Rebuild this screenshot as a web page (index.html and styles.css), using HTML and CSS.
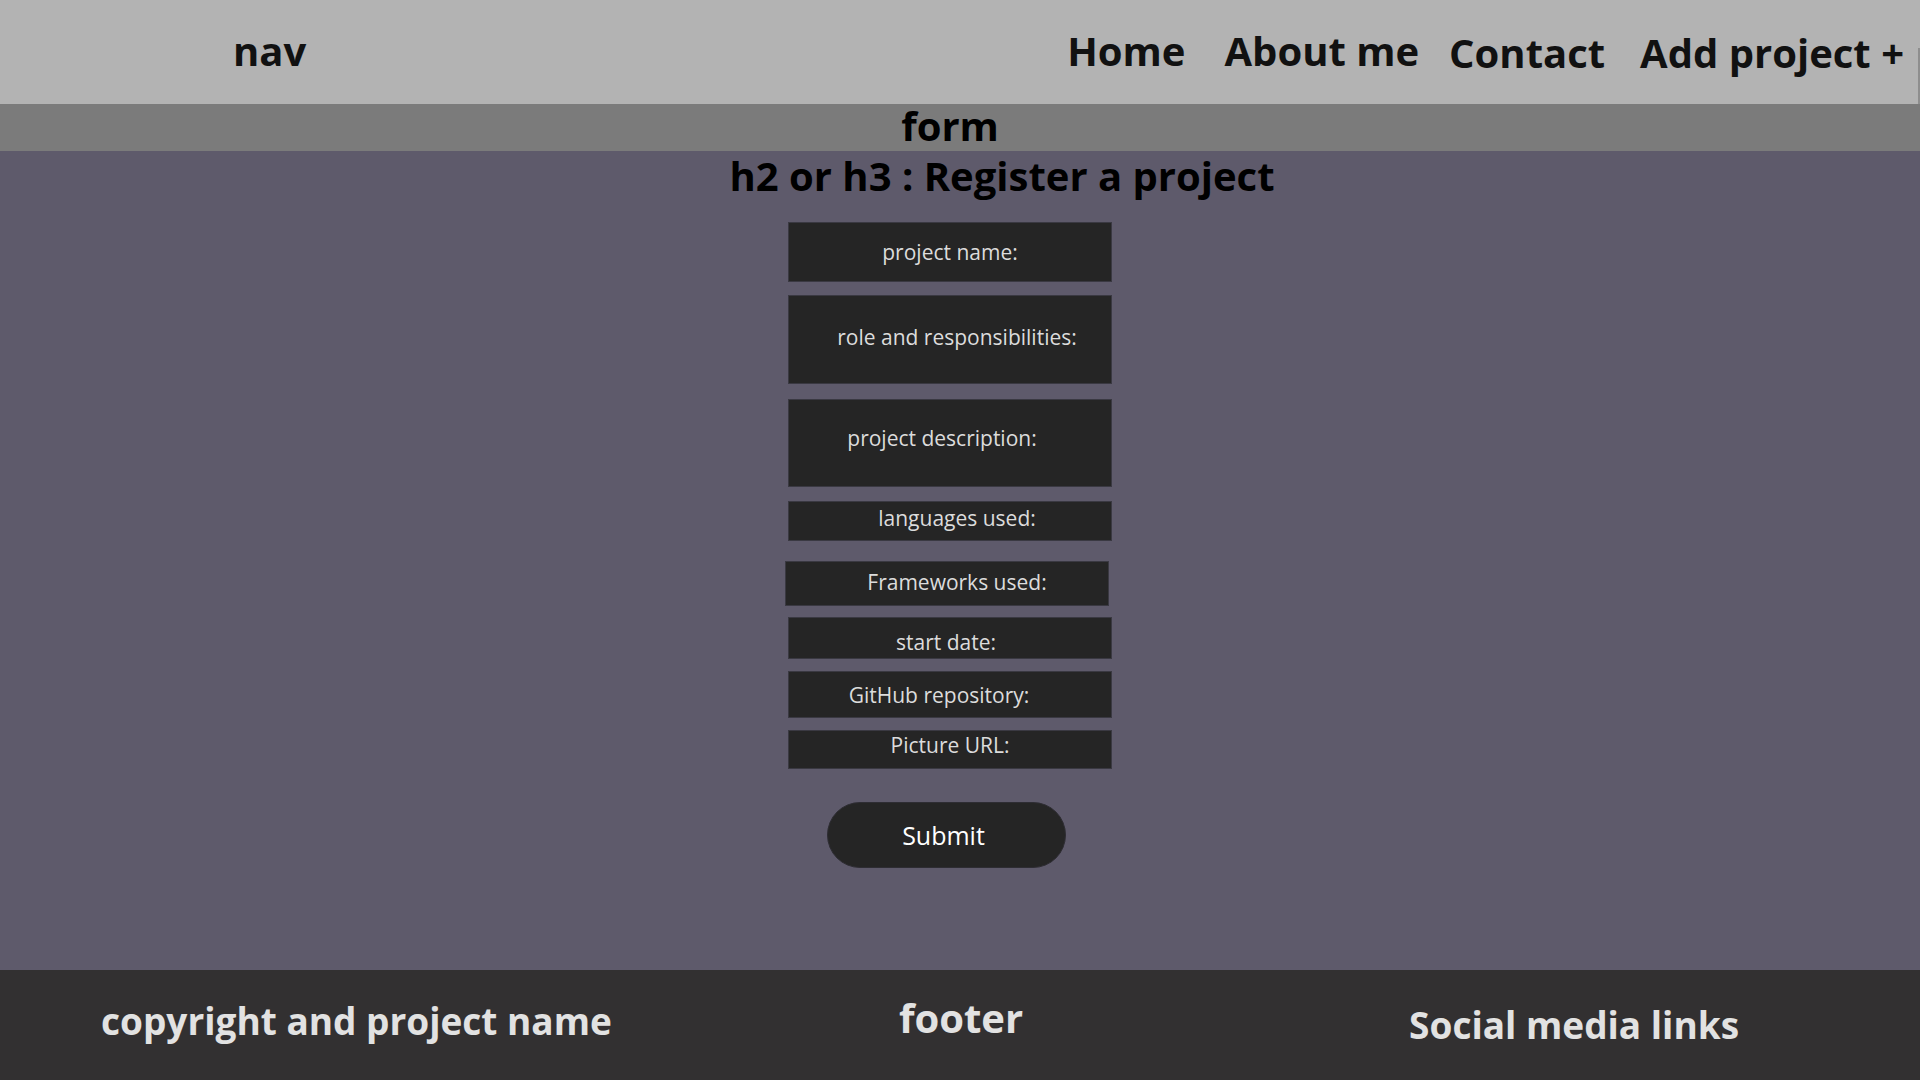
FILE: index.html
```html
<!DOCTYPE html>
<html lang="en">
<head>
<meta charset="utf-8">
<title>Register a project</title>
<link rel="stylesheet" href="styles.css">
</head>
<body>
<header class="nav">
  <span class="nav-title">nav</span>
  <ul class="nav-links">
    <li class="nav-link">Home</li>
    <li class="nav-link nav-link--about">About me</li>
    <li class="nav-link nav-link--contact nav-link--low">Contact</li>
    <li class="nav-link nav-link--add nav-link--low">Add project +</li>
  </ul>
</header>
<div class="form-bar"><span class="form-bar-text">form</span></div>
<main class="main">
  <h2 class="page-title">h2 or h3 : Register a project</h2>
  <form class="project-form">
    <div class="field field--name"><span class="field-label">project name:</span></div>
    <div class="field field--role"><span class="field-label">role and responsibilities:</span></div>
    <div class="field field--desc"><span class="field-label">project description:</span></div>
    <div class="field field--lang"><span class="field-label">languages used:</span></div>
    <div class="field field--frameworks"><span class="field-label">Frameworks used:</span></div>
    <div class="field field--start"><span class="field-label">start date:</span></div>
    <div class="field field--github"><span class="field-label">GitHub repository:</span></div>
    <div class="field field--picture"><span class="field-label">Picture URL:</span></div>
    <button type="button" class="submit-btn">Submit</button>
  </form>
</main>
<footer class="footer">
  <span class="footer-item footer-item--copy">copyright and project name</span>
  <span class="footer-item footer-item--center">footer</span>
  <span class="footer-item footer-item--social">Social media links</span>
</footer>
</body>
</html>
```
FILE: styles.css
```css
* { box-sizing: border-box; }
html, body { margin: 0; padding: 0; }
body {
  width: 1920px;
  height: 1080px;
  overflow: hidden;
  font-family: "Open Sans", "DejaVu Sans", sans-serif;
  background: #5e5a6b;
  display: flex;
  flex-direction: column;
}

/* NAV */
.nav {
  height: 104px;
  flex: none;
  background: #b3b3b3;
  display: flex;
  align-items: center;
  padding-left: 233px;
  padding-right: 16px;
  color: #111;
  font-size: 40px;
  font-weight: 700;
  position: relative;
}
.nav::after {
  content: "";
  position: absolute;
  right: 0;
  top: 48px;
  bottom: 0;
  width: 2px;
  background: #8e8e8e;
}
.nav-title { line-height: 1; margin-top: -2px; }
.nav-links {
  list-style: none;
  margin: -2px 0 0 auto;
  padding: 0;
  display: flex;
  align-items: center;
}
.nav-link { line-height: 1; }
.nav-link--about { margin-left: 39px; }
.nav-link--contact { margin-left: 30px; }
.nav-link--add { margin-left: 35px; }
.nav-link--low { position: relative; top: 2px; }

/* FORM BAR */
.form-bar {
  height: 47px;
  flex: none;
  background: #7b7b7b;
  display: flex;
  justify-content: center;
  align-items: flex-start;
  padding-right: 20px;
}
.form-bar-text {
  font-size: 40px;
  font-weight: 700;
  color: #000;
  line-height: 40px;
  margin-top: 2px;
}

/* MAIN */
.main {
  flex: 1;
  display: flex;
  flex-direction: column;
  align-items: center;
  padding-top: 1px;
}
.page-title {
  margin: 0;
  font-size: 40px;
  font-weight: 700;
  line-height: 48px;
  color: #000;
  margin-left: 84px;
}
.project-form {
  display: flex;
  flex-direction: column;
  align-items: center;
  margin-top: 22px;
}
.field {
  width: 324px;
  background: #252525;
  border: 1px solid #3a3942;
  display: flex;
  align-items: center;
  justify-content: center;
  margin-right: 20px;
}
.field-label {
  font-size: 21px;
  color: #dcdcdc;
  line-height: 1;
}
.field--name { height: 60px; }
.field--role { height: 89px; margin-top: 13px; padding-left: 14px; padding-bottom: 4px; }
.field--desc { height: 88px; margin-top: 15px; padding-right: 16px; padding-bottom: 10px; }
.field--lang { height: 40px; margin-top: 14px; padding-left: 14px; padding-bottom: 6px; }
.field--frameworks { height: 45px; margin-top: 20px; margin-right: 26px; padding-left: 20px; padding-bottom: 2px; }
.field--start { height: 42px; margin-top: 11px; padding-right: 8px; padding-top: 8px; }
.field--github { height: 47px; margin-top: 12px; padding-right: 22px; padding-top: 2px; }
.field--picture { height: 39px; margin-top: 12px; padding-bottom: 8px; }

.submit-btn {
  margin-top: 33px;
  margin-right: 27px;
  width: 239px;
  height: 66px;
  border-radius: 33px;
  background: #252525;
  border: 1px solid #2e2d33;
  color: #ffffff;
  font-family: "Open Sans", "DejaVu Sans", sans-serif;
  font-size: 25px;
  padding: 0 6px 0 0;
  line-height: 1;
}

/* FOOTER */
.footer {
  height: 110px;
  flex: none;
  background: #323031;
  display: flex;
  align-items: center;
  color: #e2e2e2;
  font-weight: 700;
}
.footer-item { line-height: 1; }
.footer-item--copy { font-size: 37px; margin-left: 101px; margin-top: -10px; }
.footer-item--center { font-size: 40px; margin-left: 287px; margin-top: -14px; }
.footer-item--social { font-size: 37px; margin-left: 386px; margin-top: -2px; }
```
